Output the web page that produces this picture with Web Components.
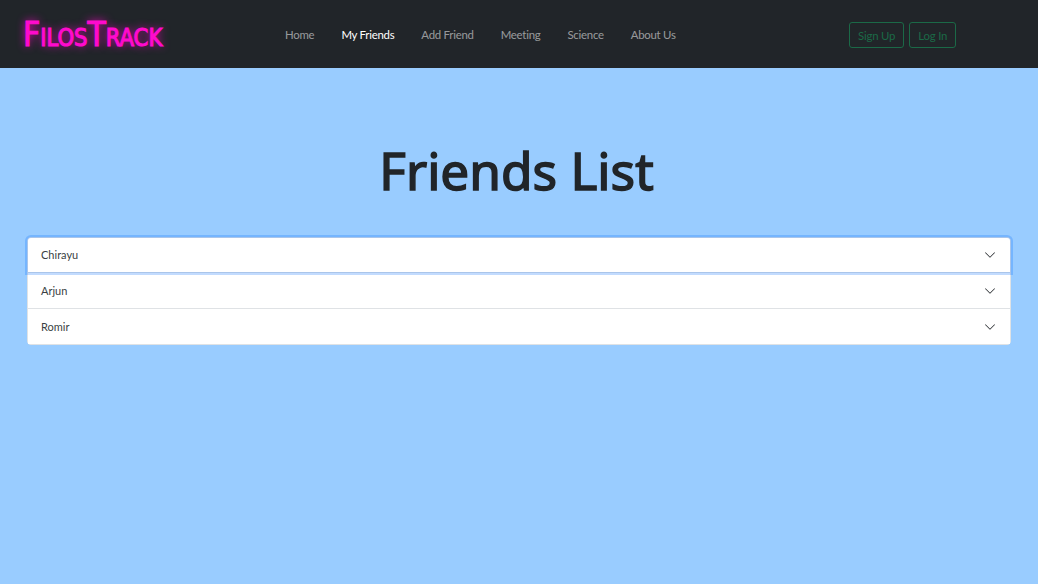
<!DOCTYPE html>
<html lang="en">
<head>
<meta charset="UTF-8">
<title>FilosTrack</title>
<style>
  html, body { margin: 0; height: 100%; }
  body { background: #99ccff; font-family: "Noto Sans", "Open Sans", sans-serif; color: #212529; }
</style>
</head>
<body>
<template id="nav-tpl">
  <style>
    :host { display: flex; align-items: center; height: 68px; background: #212529; padding: 2px 0 0 23px; box-sizing: border-box; }
    .logo { width: 262px; color: #ff0acd; font: 400 34px/1 "DejaVu Sans Condensed", sans-serif; font-variant: small-caps; -webkit-text-stroke: 1.1px #ff0acd; text-shadow: 0 0 9px #ff00cc; white-space: nowrap; margin-top: -2px; }
    .logo span { display: inline-block; transform: scaleX(.98); transform-origin: left center; }
    nav { display: flex; gap: 27px; width: 564px; }
    .btns { display: flex; gap: 5px; }
  </style>
  <div class="logo"><span>FilosTrack</span></div>
  <nav><slot name="links"></slot></nav>
  <div class="btns"><slot name="btns"></slot></div>
</template>

<template id="link-tpl">
  <style>
    :host { display: block; font: 11.4px/16px Lato, "Noto Sans", sans-serif; letter-spacing: -.25px; color: rgba(255,255,255,.55); }
    :host([active]) { color: #fff; }
  </style>
  <slot></slot>
</template>

<template id="btn-tpl">
  <style>
    :host { display: flex; align-items: center; height: 26px; padding: 0 8px; box-sizing: border-box; border: 1px solid #198754; border-radius: 3px; color: #198754; font: 11.4px Lato, "Noto Sans", sans-serif; letter-spacing: -.2px; opacity: .7; }
  </style>
  <slot></slot>
</template>

<template id="list-tpl">
  <style>
    :host { display: block; margin: 0 27px; background: #fff; border: 1px solid #dfe2e5; border-radius: 4px; }
  </style>
  <slot></slot>
</template>

<template id="item-tpl">
  <style>
    :host { display: flex; align-items: center; justify-content: space-between; height: 36px; box-sizing: border-box; padding: 0 14px 0 13px; font: 11px Lato, "Noto Sans", sans-serif; color: #3a3f44; border-top: 1px solid #dfe2e5; position: relative; background: #fff; }
    :host(:first-child) { border-top: 0; height: 34px; border-radius: 3px 3px 0 0; }
    :host(:first-child) span { margin-top: -1px; }
    :host([focused]) { box-shadow: 0 0 0 3px rgba(13,110,253,.25); z-index: 1; }
    svg { width: 12px; height: 12px; display: block; }
  </style>
  <span><slot></slot></span>
  <svg viewBox="0 0 16 16" fill="#212529"><path fill-rule="evenodd" d="M1.646 4.646a.5.5 0 0 1 .708 0L8 10.293l5.646-5.647a.5.5 0 0 1 .708.708l-6 6a.5.5 0 0 1-.708 0l-6-6a.5.5 0 0 1 0-.708z"/></svg>
</template>

<template id="page-tpl">
  <style>
    :host { display: block; }
    h1 { margin: 0; padding: 68px 5px 32px 0; text-align: center; font-size: 51.3px; line-height: 69px; font-weight: 400; -webkit-text-stroke: 1.5px #212529; }
  </style>
  <h1><slot name="title"></slot></h1>
  <slot></slot>
</template>

<ft-nav>
  <ft-link slot="links">Home</ft-link>
  <ft-link slot="links" active>My Friends</ft-link>
  <ft-link slot="links">Add Friend</ft-link>
  <ft-link slot="links">Meeting</ft-link>
  <ft-link slot="links">Science</ft-link>
  <ft-link slot="links">About Us</ft-link>
  <ft-btn slot="btns">Sign Up</ft-btn>
  <ft-btn slot="btns">Log In</ft-btn>
</ft-nav>
<ft-page>
  <span slot="title">Friends List</span>
  <ft-list>
    <ft-item focused>Chirayu</ft-item>
    <ft-item>Arjun</ft-item>
    <ft-item>Romir</ft-item>
  </ft-list>
</ft-page>

<script>
  'use strict'
  const tags = { 'ft-nav': 'nav-tpl', 'ft-link': 'link-tpl', 'ft-btn': 'btn-tpl', 'ft-list': 'list-tpl', 'ft-item': 'item-tpl', 'ft-page': 'page-tpl' }
  for (const [tag, id] of Object.entries(tags)) {
    customElements.define(tag, class extends HTMLElement {
      constructor() {
        super()
        this.attachShadow({ mode: 'open' }).append(document.getElementById(id).content.cloneNode(true))
      }
    })
  }
</script>
</body>
</html>
